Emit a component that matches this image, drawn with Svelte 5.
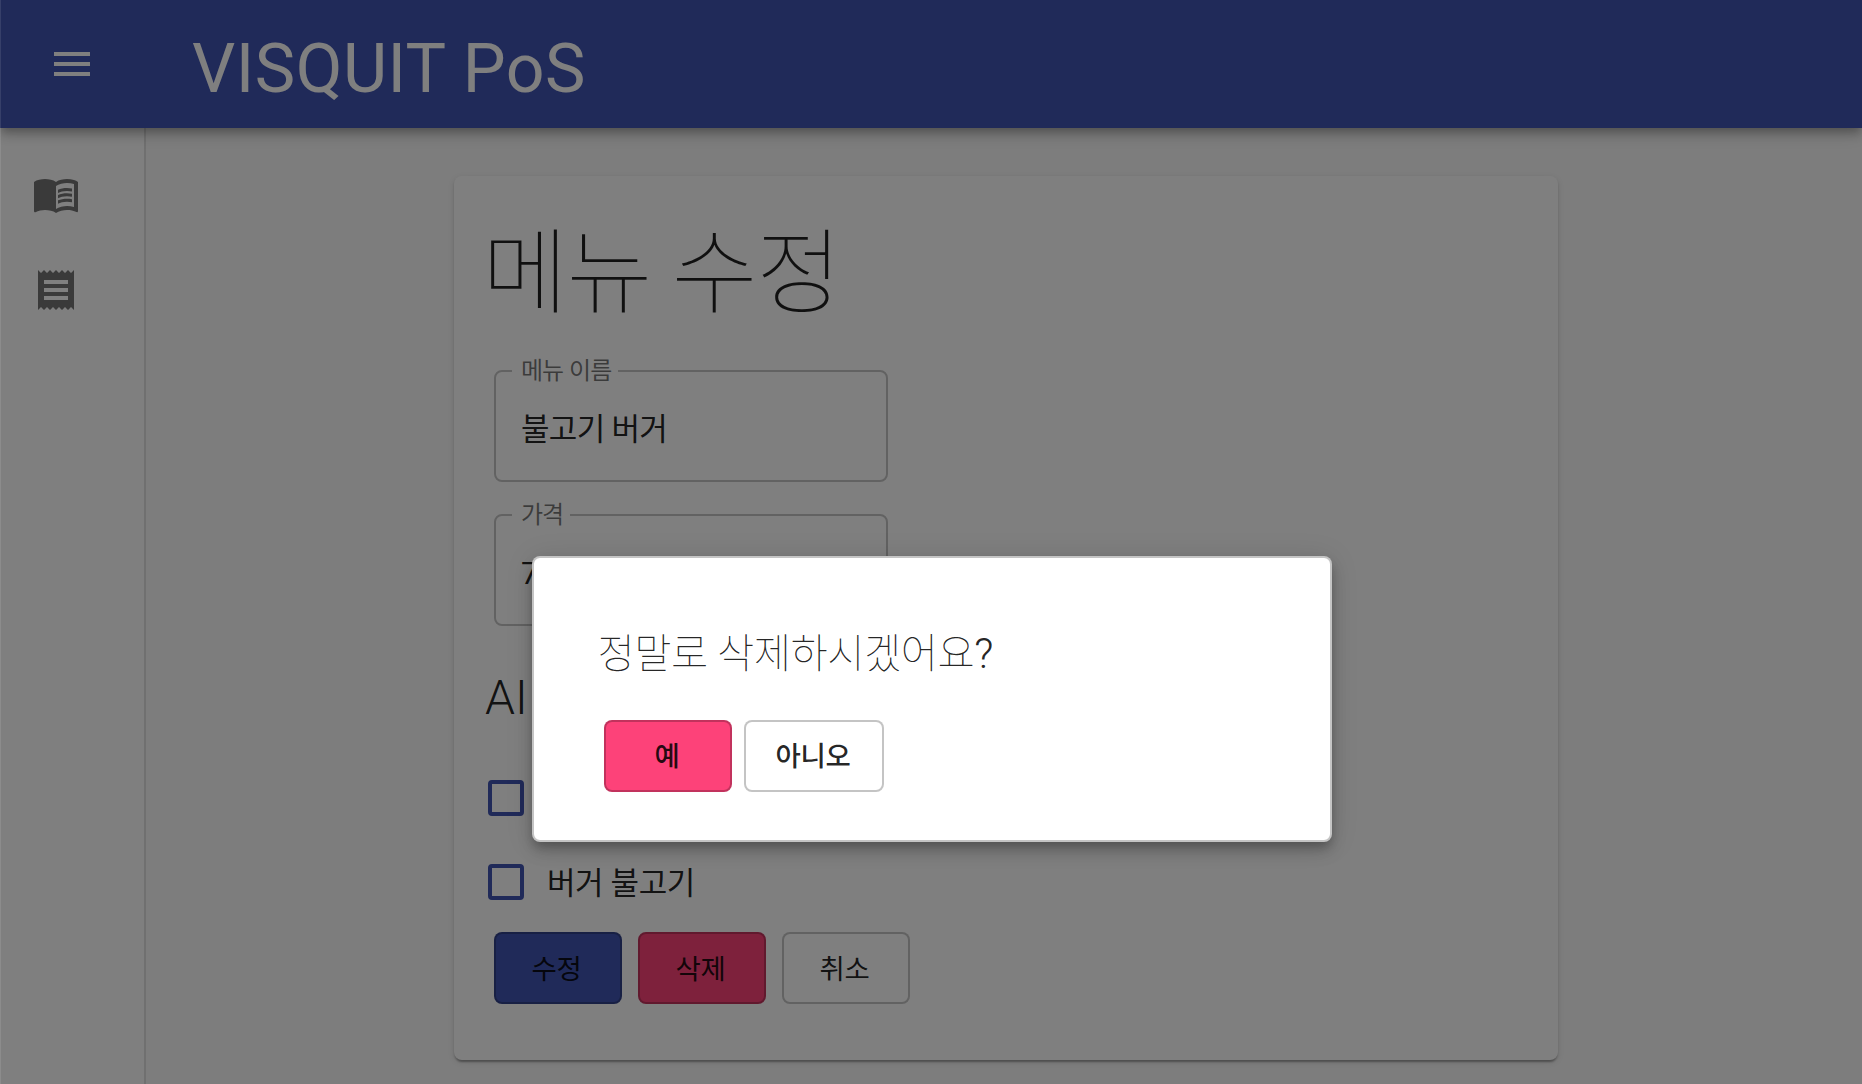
<script>
  let open = $state(true);
  const options = ['', '버거 불고기'];
</script>

<div class="page">
  <header class="appbar">
    <button class="icon-button" aria-label="menu">
      <svg viewBox="0 0 24 24"><path d="M3 18h18v-2H3v2zm0-5h18v-2H3v2zm0-7v2h18V6H3z" /></svg>
    </button>
    <div class="brand">VISQUIT PoS</div>
  </header>

  <div class="body">
    <nav class="drawer">
      <svg viewBox="0 0 24 24">
        <path d="M21 5c-1.11-.35-2.33-.5-3.5-.5-1.95 0-4.05.4-5.5 1.5-1.45-1.1-3.55-1.5-5.5-1.5S2.45 4.9 1 6v14.65c0 .25.25.5.5.5.1 0 .15-.05.25-.05C3.1 20.45 5.05 20 6.5 20c1.95 0 4.05.4 5.5 1.5 1.35-.85 3.8-1.5 5.5-1.5 1.65 0 3.35.3 4.75 1.05.1.05.15.05.25.05.25 0 .5-.25.5-.5V6c-.6-.45-1.25-.75-2-1zm0 13.5c-1.1-.35-2.3-.5-3.5-.5-1.7 0-4.15.65-5.5 1.5V8c1.35-.85 3.8-1.5 5.5-1.5 1.2 0 2.4.15 3.5.5v11.5z" />
        <path d="M17.5 10.5c.88 0 1.73.09 2.5.26V9.24c-.79-.15-1.64-.24-2.5-.24-1.7 0-3.24.29-4.5.83v1.66c1.13-.64 2.7-.99 4.5-.99zM13 12.49v1.66c1.13-.64 2.7-.99 4.5-.99.88 0 1.73.09 2.5.26V11.9c-.79-.15-1.64-.24-2.5-.24-1.7 0-3.24.3-4.5.83zM17.5 14.33c-1.7 0-3.24.29-4.5.83v1.66c1.13-.64 2.7-.99 4.5-.99.88 0 1.73.09 2.5.26v-1.52c-.79-.16-1.64-.24-2.5-.24z" />
      </svg>
      <svg viewBox="0 0 24 24">
        <path d="M18 17H6v-2h12v2zm0-4H6v-2h12v2zm0-4H6V7h12v2zM3 22l1.5-1.5L6 22l1.5-1.5L9 22l1.5-1.5L12 22l1.5-1.5L15 22l1.5-1.5L18 22l1.5-1.5L21 22V2l-1.5 1.5L18 2l-1.5 1.5L15 2l-1.5 1.5L12 2l-1.5 1.5L9 2 7.5 3.5 6 2 4.5 3.5 3 2v20z" />
      </svg>
    </nav>

    <main>
      <section class="card">
        <h1>메뉴 수정</h1>
        <fieldset class="field">
          <legend class="wide">메뉴 이름</legend>
          <div class="value">불고기 버거</div>
        </fieldset>
        <fieldset class="field">
          <legend class="narrow">가격</legend>
          <div class="value">7</div>
        </fieldset>
        <h2>AI</h2>
        {#each options as option}
          <div class="option"><span class="box"></span><span class="option-text">{option}</span></div>
        {/each}
        <div class="actions">
          <button class="btn primary">수정</button>
          <button class="btn danger">삭제</button>
          <button class="btn">취소</button>
        </div>
      </section>
    </main>
  </div>

  {#if open}
    <div class="backdrop">
      <div class="dialog" role="dialog">
        <p>정말로 삭제하시겠어요<span>?</span></p>
        <div class="dialog-actions">
          <button class="btn danger strong" onclick={() => (open = false)}>예</button>
          <button class="btn strong no" onclick={() => (open = false)}>아니오</button>
        </div>
      </div>
    </div>
  {/if}
</div>

<style>
  :global(body) {
    overflow: hidden;
  }
  .page,
  .page * {
    box-sizing: border-box;
  }
  .page {
    position: relative;
    width: 1862px;
    height: 1084px;
    overflow: hidden;
    display: flex;
    flex-direction: column;
    background: #fafafa;
    color: rgba(0, 0, 0, 0.87);
    font-family: Roboto, 'Noto Sans CJK KR', sans-serif;
  }
  svg {
    display: block;
    width: 48px;
    height: 48px;
    fill: currentColor;
  }
  button {
    font-family: inherit;
    color: inherit;
    padding: 0;
  }
  .appbar {
    height: 128px;
    flex: none;
    z-index: 1;
    display: flex;
    align-items: center;
    padding-left: 48px;
    gap: 96px;
    background: #4054b2;
    color: #fff;
    box-shadow: 0 4px 8px -2px rgba(0, 0, 0, 0.2), 0 8px 10px rgba(0, 0, 0, 0.14), 0 2px 20px rgba(0, 0, 0, 0.12);
  }
  .icon-button {
    border: 0;
    background: none;
  }
  .brand {
    font-size: 68px;
    line-height: 80px;
    padding-top: 10px;
    letter-spacing: 0.5px;
  }
  .body {
    flex: 1;
    display: flex;
    min-height: 0;
  }
  .drawer {
    width: 146px;
    padding: 42px 32px;
    display: flex;
    flex-direction: column;
    gap: 48px;
    background: #fff;
    border-right: 2px solid #e0e0e0;
    color: rgba(0, 0, 0, 0.54);
  }
  main {
    flex: 1;
    display: flex;
    padding: 48px 304px 24px 308px;
  }
  .card {
    width: 1104px;
    height: 884px;
    padding: 40px;
    background: #fff;
    border-radius: 8px;
    box-shadow: 0 4px 2px -2px rgba(0, 0, 0, 0.2), 0 2px 2px rgba(0, 0, 0, 0.14), 0 2px 6px rgba(0, 0, 0, 0.12);
  }
  h1,
  h2,
  p {
    margin: 0;
    white-space: nowrap;
  }
  h1 {
    height: 142px;
    padding-top: 8px;
    margin-left: -12px;
    font-weight: 100;
    font-size: 93.5px;
    line-height: 100px;
    letter-spacing: -1.6px;
  }
  .field {
    width: 394px;
    height: 124px;
    margin: 0 0 20px;
    padding: 0 0 0 25px;
    border: 2px solid rgba(0, 0, 0, 0.23);
    border-radius: 8px;
  }
  legend {
    height: 26px;
    margin-left: -9px;
    padding: 0 0 0 9px;
    font-size: 24px;
    line-height: 26px;
    letter-spacing: -1px;
    word-spacing: 1px;
    white-space: nowrap;
    color: rgba(0, 0, 0, 0.54);
  }
  .wide {
    width: 106px;
  }
  .narrow {
    width: 58px;
  }
  .value {
    font-size: 31px;
    line-height: 38px;
    padding-top: 27px;
    letter-spacing: -0.7px;
  }
  h2 {
    margin: 40px 0 26px -9px;
    font-size: 48px;
    line-height: 64px;
    font-weight: 300;
  }
  .option {
    display: flex;
    align-items: center;
    height: 84px;
    margin-left: -6px;
    gap: 23px;
    font-size: 31px;
    letter-spacing: -0.4px;
  }
  .option-text {
    padding-bottom: 4px;
  }
  .box {
    width: 36px;
    height: 36px;
    border: 4px solid #4054b2;
    border-radius: 4px;
  }
  .actions {
    display: flex;
    gap: 16px;
    padding-top: 8px;
  }
  .btn {
    width: 128px;
    height: 72px;
    padding: 0 3px 3px 0;
    border: 2px solid rgba(0, 0, 0, 0.23);
    border-radius: 8px;
    background: #fff;
    font-size: 27.5px;
    letter-spacing: -0.3px;
  }
  .primary {
    background: #4054b2;
  }
  .danger {
    background: #fd4279;
  }
  .strong {
    font-weight: 500;
    padding-right: 1px;
  }
  .no {
    width: 140px;
  }
  .backdrop {
    position: absolute;
    inset: 0;
    z-index: 2;
    display: flex;
    align-items: center;
    justify-content: center;
    padding-top: 312px;
    background: rgba(0, 0, 0, 0.5);
    border-left: 1px solid rgba(255, 255, 255, 0.1);
  }
  .dialog {
    width: 800px;
    height: 286px;
    margin-top: 1px;
    padding: 66px 66px 0 64px;
    background: #fff;
    border: 2px solid rgba(0, 0, 0, 0.23);
    border-radius: 8px;
    box-shadow: 0 6px 10px -2px rgba(0, 0, 0, 0.2), 0 10px 16px rgba(0, 0, 0, 0.14), 0 2px 28px rgba(0, 0, 0, 0.12);
  }
  p {
    height: 96px;
    font-size: 40.5px;
    line-height: 60px;
    font-weight: 100;
    letter-spacing: -0.5px;
  }
  p span {
    font-size: 42px;
    font-weight: 300;
  }
  .dialog-actions {
    display: flex;
    gap: 12px;
    padding-left: 6px;
  }
</style>
